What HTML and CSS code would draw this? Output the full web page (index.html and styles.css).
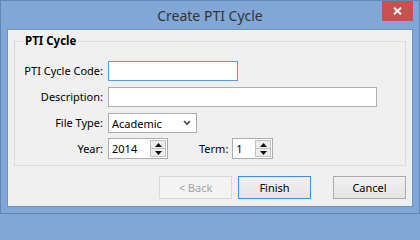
FILE: index.html
```html
<!DOCTYPE html>
<html>
<head>
<meta charset="utf-8">
<link rel="stylesheet" href="styles.css">
</head>
<body>
<div class="window">
  <div class="titlebar">
    <div class="title">Create PTI Cycle</div>
    <button class="close" aria-label="Close">
      <svg width="9" height="8" viewBox="0 0 9 8"><path d="M1 0.8 L8 7.2 M8 0.8 L1 7.2" stroke="#fff" stroke-width="1.9" fill="none"/></svg>
    </button>
  </div>
  <div class="client">
    <fieldset class="group">
      <legend>PTI Cycle</legend>
      <div class="form">
        <label class="lbl">PTI Cycle Code:</label>
        <div class="field"><input class="textbox code" type="text" value=""></div>

        <label class="lbl">Description:</label>
        <div class="field"><input class="textbox desc" type="text" value=""></div>

        <label class="lbl">File Type:</label>
        <div class="field">
          <div class="combo"><span>Academic</span>
            <svg width="8" height="6" viewBox="0 0 8 6"><path d="M1 1 L4 4.2 L7 1" stroke="#555" stroke-width="1.8" fill="none"/></svg>
          </div>
        </div>

        <label class="lbl spinrow">Year:</label>
        <div class="field spinrow">
          <div class="spin year"><span class="val">2014</span>
            <div class="spinbtns">
              <div class="sb"><svg width="7" height="4" viewBox="0 0 7 4"><path d="M0 4 L3.5 0 L7 4Z" fill="#111"/></svg></div>
              <div class="sb"><svg width="7" height="4" viewBox="0 0 7 4"><path d="M0 0 L3.5 4 L7 0Z" fill="#111"/></svg></div>
            </div>
          </div>
          <label class="lbl term">Term:</label>
          <div class="spin termbox"><span class="val">1</span>
            <div class="spinbtns">
              <div class="sb"><svg width="7" height="4" viewBox="0 0 7 4"><path d="M0 4 L3.5 0 L7 4Z" fill="#111"/></svg></div>
              <div class="sb"><svg width="7" height="4" viewBox="0 0 7 4"><path d="M0 0 L3.5 4 L7 0Z" fill="#111"/></svg></div>
            </div>
          </div>
        </div>
      </div>
    </fieldset>
    <div class="buttons">
      <button class="btn disabled">&lt; Back</button>
      <button class="btn default">Finish</button>
      <button class="btn cancel">Cancel</button>
    </div>
  </div>
</div>
</body>
</html>
```

FILE: styles.css
```css
html, body {
  margin: 0;
  padding: 0;
  background: #80a7d6;
}

.window {
  width: 420px;
  height: 214px;
  box-sizing: border-box;
  border: 1px solid #6386b8;
  background: #80a7d6;
  display: flex;
  flex-direction: column;
  font-family: "Noto Sans", "Open Sans", sans-serif;
  font-size: 11px;
  color: #000;
}

.titlebar {
  height: 28px;
  flex: none;
  display: grid;
  grid-template-columns: 1fr auto 1fr;
  padding: 0 6px;
  align-items: start;
}

.title {
  grid-column: 2;
  font-size: 14px;
  line-height: 29px;
  color: #333;
}

.close {
  grid-column: 3;
  justify-self: end;
  width: 31px;
  height: 20px;
  padding: 0;
  border: 0;
  background: #c75050;
  display: flex;
  align-items: center;
  justify-content: center;
}

.client {
  flex: 1;
  margin: 0 6px 6px;
  border: 1px solid #6d91c2;
  background: #f0f0f0;
  display: flex;
  flex-direction: column;
}

.group {
  margin: 3px 6px 0;
  padding: 0 0 6px 0;
  border: 1px solid #dcdcdc;
  min-width: 0;
}

.group legend {
  margin-left: 8px;
  padding: 0 2px;
  font-weight: bold;
  font-size: 11.5px;
  line-height: 16px;
}

.form {
  display: grid;
  grid-template-columns: 88px 1fr;
  column-gap: 5px;
  row-gap: 6px;
  padding-top: 12px;
  align-items: center;
}

.lbl {
  text-align: right;
  white-space: nowrap;
  line-height: 16px;
}

.field {
  display: flex;
  align-items: center;
  height: 20px;
}

.spinrow {
  margin-top: -1px;
}
.field.spinrow {
  height: 21px;
}

.textbox {
  box-sizing: border-box;
  height: 20px;
  margin: 0;
  padding: 0 3px;
  border: 1px solid #abadb3;
  background: #fff;
  font: inherit;
  outline: none;
}

.code {
  width: 130px;
  border-color: #569de5;
}

.desc {
  width: 269px;
}

.combo {
  box-sizing: border-box;
  width: 89px;
  height: 20px;
  border: 1px solid #abadb3;
  background: #fff;
  display: flex;
  align-items: center;
  justify-content: space-between;
  padding: 0 5px 0 3px;
}

.spin {
  box-sizing: border-box;
  height: 21px;
  border: 1px solid #abadb3;
  background: #fff;
  display: flex;
  align-items: stretch;
}

.spin .val {
  flex: 1;
  padding-left: 3px;
  line-height: 19px;
}

.year {
  width: 60px;
}

.termbox {
  width: 41px;
}

.lbl.term {
  margin: 0 4px 0 31px;
}

.spinbtns {
  width: 16px;
  display: flex;
  flex-direction: column;
  padding: 1px 1px 1px 0;
}

.sb {
  flex: 1;
  display: flex;
  align-items: center;
  justify-content: center;
  background: #ededed;
  border: 1px solid #c2c2c2;
}
.sb + .sb {
  border-top: 0;
}

.buttons {
  display: flex;
  justify-content: flex-end;
  gap: 6px;
  margin: 10px 6px 0;
}

.btn {
  width: 73px;
  height: 23px;
  padding: 0;
  margin: 0;
  font: inherit;
  color: #000;
  border: 1px solid #acacac;
  background: linear-gradient(#f0f0f0, #e5e5e5);
}

.btn.default {
  border-color: #3c8fe6;
}

.btn.disabled {
  color: #a3a3a3;
  border-color: #d9d9d9;
  background: #f4f4f4;
}

.btn.cancel {
  margin-left: 16px;
}
```
